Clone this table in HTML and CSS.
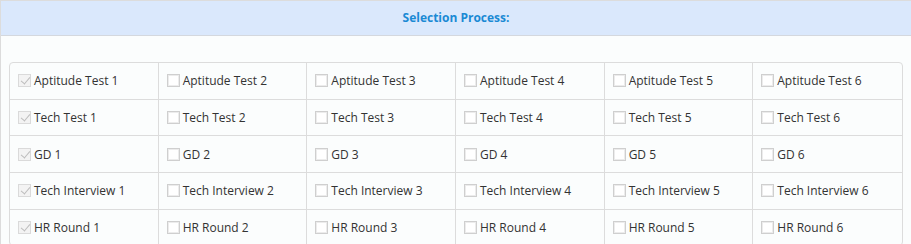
FILE: index.html
```html
<!DOCTYPE html>
<html lang="en">
<head>
    <meta charset="UTF-8">
    <meta name="viewport" content="width=device-width, initial-scale=1.0">
    <title>Selection Process</title>
    <link rel="stylesheet" href="styles.css">
</head>
<body>
    <div class="panel">
        <div class="panel-heading">Selection Process:</div>
        <div class="panel-body">
            <table class="rounds">
                <tr>
                    <td><label><span class="box checked"></span>Aptitude Test 1</label></td>
                    <td><label><span class="box"></span>Aptitude Test 2</label></td>
                    <td><label><span class="box"></span>Aptitude Test 3</label></td>
                    <td><label><span class="box"></span>Aptitude Test 4</label></td>
                    <td><label><span class="box"></span>Aptitude Test 5</label></td>
                    <td><label><span class="box"></span>Aptitude Test 6</label></td>
                </tr>
                <tr>
                    <td><label><span class="box checked"></span>Tech Test 1</label></td>
                    <td><label><span class="box"></span>Tech Test 2</label></td>
                    <td><label><span class="box"></span>Tech Test 3</label></td>
                    <td><label><span class="box"></span>Tech Test 4</label></td>
                    <td><label><span class="box"></span>Tech Test 5</label></td>
                    <td><label><span class="box"></span>Tech Test 6</label></td>
                </tr>
                <tr>
                    <td><label><span class="box checked"></span>GD 1</label></td>
                    <td><label><span class="box"></span>GD 2</label></td>
                    <td><label><span class="box"></span>GD 3</label></td>
                    <td><label><span class="box"></span>GD 4</label></td>
                    <td><label><span class="box"></span>GD 5</label></td>
                    <td><label><span class="box"></span>GD 6</label></td>
                </tr>
                <tr>
                    <td><label><span class="box checked"></span>Tech Interview 1</label></td>
                    <td><label><span class="box"></span>Tech Interview 2</label></td>
                    <td><label><span class="box"></span>Tech Interview 3</label></td>
                    <td><label><span class="box"></span>Tech Interview 4</label></td>
                    <td><label><span class="box"></span>Tech Interview 5</label></td>
                    <td><label><span class="box"></span>Tech Interview 6</label></td>
                </tr>
                <tr>
                    <td><label><span class="box checked"></span>HR Round 1</label></td>
                    <td><label><span class="box"></span>HR Round 2</label></td>
                    <td><label><span class="box"></span>HR Round 3</label></td>
                    <td><label><span class="box"></span>HR Round 4</label></td>
                    <td><label><span class="box"></span>HR Round 5</label></td>
                    <td><label><span class="box"></span>HR Round 6</label></td>
                </tr>
            </table>
        </div>
    </div>
</body>
</html>
```

FILE: styles.css
```css
body {
    margin: 0;
    font-family: "Open Sans", Arial, sans-serif;
    font-size: 12px;
    color: #333;
    background: #fbfdfd;
}
.panel {
    border: 1px solid #dcdcdc;
    margin-right: -1px;
    background: #fbfdfd;
}
.panel-heading {
    height: 34px;
    line-height: 34px;
    text-align: center;
    font-weight: bold;
    color: #1a8ad4;
    background: #dae8fc;
    border-bottom: 1px solid #d4d8de;
}
.panel-body {
    padding: 26px 8px 20px;
}
.rounds {
    width: 894px;
    border-spacing: 0;
    border: 1px solid #dcdcdc;
    border-radius: 4px;
    table-layout: fixed;
}
.rounds td {
    height: 35.7px;
    padding: 0 0 0 8px;
    border-right: 1px solid #dcdcdc;
    border-bottom: 1px solid #dcdcdc;
    white-space: nowrap;
}
.rounds td:last-child { border-right: none; }
.rounds tr:last-child td { border-bottom: none; }
label {
    display: flex;
    align-items: center;
}
.box {
    position: relative;
    width: 13px;
    height: 13px;
    box-sizing: border-box;
    margin-right: 3px;
    border: 1px solid #cfcfcf;
    box-shadow: inset 0 0 0 1px #ececec;
    background: #fff;
}
.box.checked {
    border-color: #dadada;
    background: #f3f3f3;
    box-shadow: none;
}
.box.checked::after {
    content: "";
    position: absolute;
    left: 4px;
    top: 0px;
    width: 4px;
    height: 8px;
    border-right: 1px solid #bdbdbd;
    border-bottom: 1px solid #bdbdbd;
    transform: rotate(40deg);
}
```
